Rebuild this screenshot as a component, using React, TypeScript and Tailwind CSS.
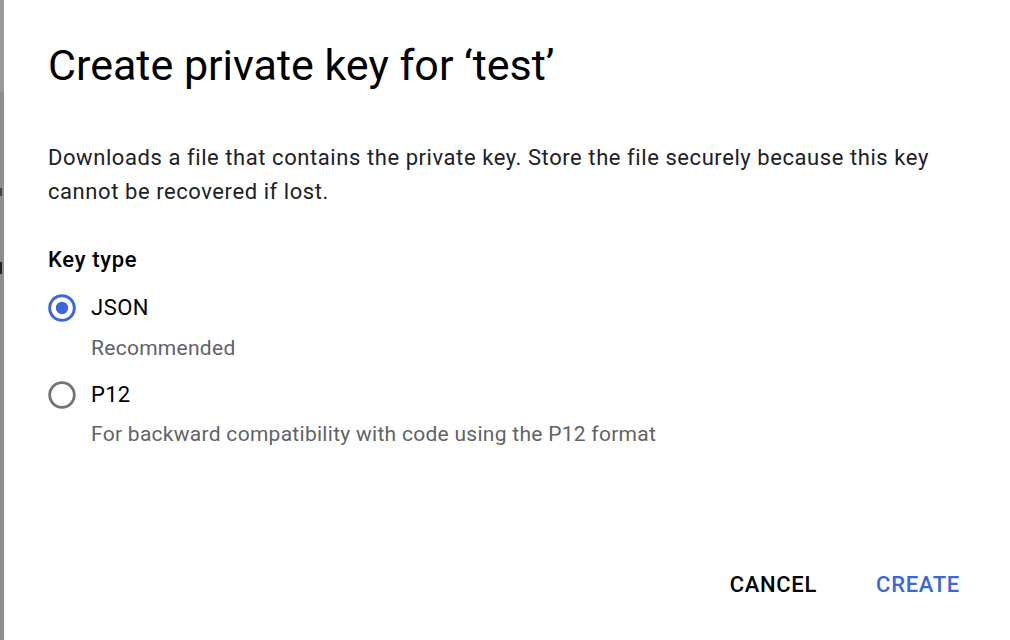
import React from "react";

function Radio({ checked }: { checked: boolean }) {
  return (
    <svg width="28" height="28" viewBox="0 0 28 28" className="shrink-0">
      {checked ? (
        <>
          <circle cx="14" cy="14" r="12.3" fill="none" stroke="#3c67d6" strokeWidth="3" />
          <circle cx="14" cy="14" r="6.2" fill="#3c67d6" />
        </>
      ) : (
        <circle cx="14" cy="14" r="12.3" fill="none" stroke="#737373" strokeWidth="2.8" />
      )}
    </svg>
  );
}

export default function App() {
  return (
    <div
      className="flex h-[640px] w-[1010px] overflow-hidden bg-white text-[#202124]"
      style={{ fontFamily: "Roboto, 'Noto Sans', sans-serif" }}
    >
      <div className="flex w-[4px] shrink-0 flex-col">
        <div className="h-[92px] bg-[#9a9a9a]" />
        <div className="flex-1 bg-[#8e8e8e] pt-[96px]">
          <div className="h-[8px] w-[2px] bg-[#444]" />
          <div className="mt-[66px] h-[12px] w-[2px] bg-[#222]" />
        </div>
      </div>
      <div className="flex flex-1 flex-col pl-[44px] pr-[48px]">
        <h1 className="mt-[39px] text-[43px] leading-[52px] font-normal text-black">
          Create private key for ‘test’
        </h1>
        <p className="mt-[50px] text-[22px] leading-[34px] tracking-[0.57px] text-[#202124]">
          Downloads a file that contains the private key. Store the file securely because this key cannot be
          recovered if lost.
        </p>
        <div className="mt-[37px] text-[22px] leading-[28px] font-medium tracking-[0.7px] text-black">
          Key type
        </div>
        <div className="mt-[20px] flex flex-col">
          <div className="flex items-center gap-[15px]">
            <Radio checked />
            <span className="text-[22px] leading-[28px] tracking-[0.5px] text-black">JSON</span>
          </div>
          <div className="mt-[12px] pl-[43px] text-[21px] leading-[28px] tracking-[0.28px] text-[#5f6368]">
            Recommended
          </div>
          <div className="mt-[19px] flex items-center gap-[15px]">
            <Radio checked={false} />
            <span className="text-[22px] leading-[28px] tracking-[0.3px] text-black">P12</span>
          </div>
          <div className="mt-[11px] pl-[43px] text-[21px] leading-[28px] tracking-[0.28px] text-[#5f6368]">
            For backward compatibility with code using the P12 format
          </div>
        </div>
        <div className="mt-auto mb-[41px] flex justify-end gap-[59px] pr-[2px]">
          <button className="text-[22px] leading-[28px] font-medium tracking-[0.7px] text-black">CANCEL</button>
          <button className="text-[22px] leading-[28px] font-medium tracking-[0.7px] text-[#3c67d6]">
            CREATE
          </button>
        </div>
      </div>
    </div>
  );
}
